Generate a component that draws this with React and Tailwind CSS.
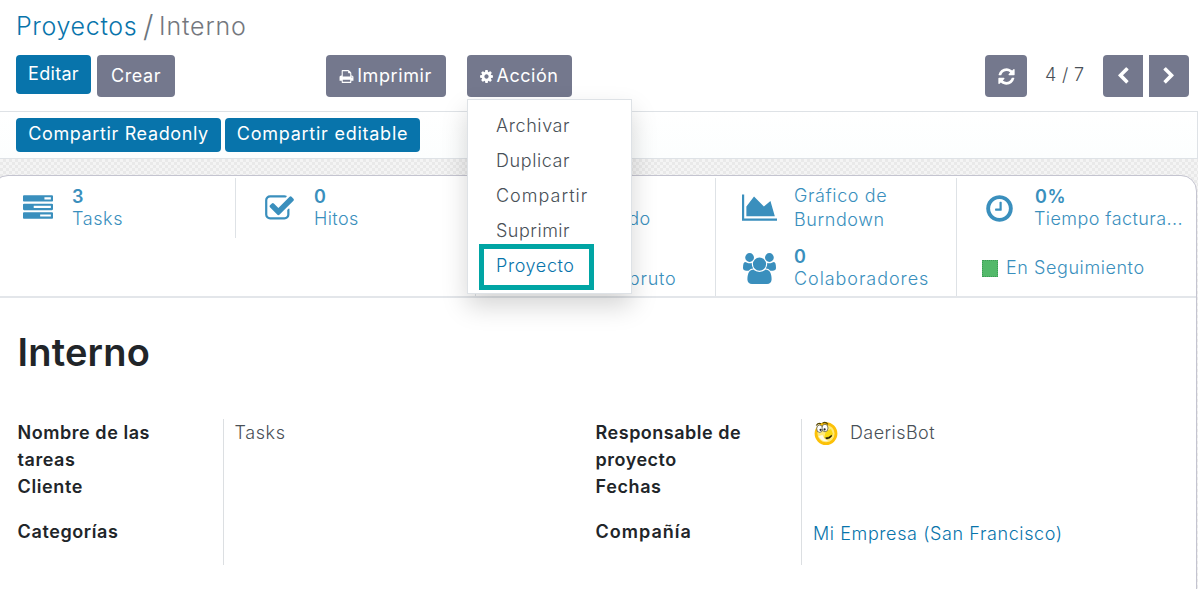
import React from "react";

const P = {
  tasks: "M1024 1408h640v-128h-640v128zm-384-512h1024v-128h-1024v128zm640-512h384v-128h-384v128zm512 832v256q0 26-19 45t-45 19h-1664q-26 0-45-19t-19-45v-256q0-26 19-45t45-19h1664q26 0 45 19t19 45zm0-512v256q0 26-19 45t-45 19h-1664q-26 0-45-19t-19-45v-256q0-26 19-45t45-19h1664q26 0 45 19t19 45zm0-512v256q0 26-19 45t-45 19h-1664q-26 0-45-19t-19-45v-256q0-26 19-45t45-19h1664q26 0 45 19t19 45z",
  check: "M1472 930v318q0 119-84.5 203.5t-203.5 84.5h-832q-119 0-203.5-84.5t-84.5-203.5v-832q0-119 84.5-203.5t203.5-84.5h832q63 0 117 25 15 7 18 23 3 17-9 29l-49 49q-10 10-23 10-3 0-9-2-23-6-45-6h-832q-66 0-113 47t-47 113v832q0 66 47 113t113 47h832q66 0 113-47t47-113v-254q0-13 9-22l64-64q10-10 23-10 6 0 12 3 20 8 20 29zm231-489l-814 814q-24 24-57 24t-57-24l-430-430q-24-24-24-57t24-57l110-110q24-24 57-24t57 24l263 263 647-647q24-24 57-24t57 24l110 110q24 24 24 57t-24 57z",
  chart: "M2048 1536v128h-2048v-1536h128v1408h1920zm-384-1024l256 896h-1664v-576l448-576 576 576z",
  clock: "M1024 544v448q0 14-9 23t-23 9h-320q-14 0-23-9t-9-23v-64q0-14 9-23t23-9h224v-352q0-14 9-23t23-9h64q14 0 23 9t9 23zm416 352q0-148-73-273t-198-198-273-73-273 73-198 198-73 273 73 273 198 198 273 73 273-73 198-198 73-273zm224 0q0 209-103 385.5t-279.5 279.5-385.5 103-385.5-103-279.5-279.5-103-385.5 103-385.5 279.5-279.5 385.5-103 385.5 103 279.5 279.5 103 385.5z",
  print: "M448 1536h896v-256h-896v256zm0-640h896v-384h-160q-40 0-68-28t-28-68v-160h-640v640zm1152 64q0-26-19-45t-45-19-45 19-19 45 19 45 45 19 45-19 19-45zm128 0v416q0 13-9.5 22.5t-22.5 9.5h-224v160q0 40-28 68t-68 28h-960q-40 0-68-28t-28-68v-160h-224q-13 0-22.5-9.5t-9.5-22.5v-416q0-79 56.5-135.5t135.5-56.5h64v-544q0-40 28-68t68-28h672q40 0 88 20t76 48l152 152q28 28 48 76t20 88v256h64q79 0 135.5 56.5t56.5 135.5z",
  cog: "M1152 896q0-106-75-181t-181-75-181 75-75 181 75 181 181 75 181-75 75-181zm512-109v222q0 12-8 23t-20 13l-185 28q-19 54-39 91 35 50 107 138 10 12 10 25t-9 23q-27 37-99 108t-94 71q-12 0-26-9l-138-108q-44 23-91 38-16 136-29 186-7 28-36 28h-222q-14 0-24.5-8.5t-11.5-21.5l-28-184q-49-16-90-37l-141 107q-10 9-25 9-14 0-25-11-126-114-165-168-7-10-7-23 0-12 8-23 15-21 51-66.5t54-70.5q-27-50-41-99l-183-27q-13-2-21-12.5t-8-23.5v-222q0-12 8-23t19-13l186-28q14-46 39-92-40-57-107-138-10-12-10-24 0-10 9-23 26-36 98.5-107.5t94.5-71.5q13 0 26 10l138 107q44-23 91-38 16-136 29-186 7-28 36-28h222q14 0 24.5 8.5t11.5 21.5l28 184q49 16 90 37l142-107q9-9 24-9 13 0 25 10 129 119 165 170 7 8 7 22 0 12-8 23-15 21-51 66.5t-54 70.5q26 50 41 98l183 28q13 2 21 12.5t8 23.5z",
  refresh: "M1639 1056q0 5-1 7-64 268-268 434.5t-478 166.5q-146 0-282.5-55t-243.5-157l-129 129q-19 19-45 19t-45-19-19-45v-448q0-26 19-45t45-19h448q26 0 45 19t19 45-19 45l-137 137q71 66 161 102t187 36q134 0 250-65t186-179q11-17 53-117 8-23 30-23h192q13 0 22.5 9.5t9.5 22.5zm25-800v448q0 26-19 45t-45 19h-448q-26 0-45-19t-19-45 19-45l138-138q-148-137-349-137-134 0-250 65t-186 179q-11 17-53 117-8 23-30 23h-199q-13 0-22.5-9.5t-9.5-22.5v-7q65-268 270-434.5t480-166.5q146 0 284 55.5t245 156.5l130-129q19-19 45-19t45 19 19 45z",
  left: "M1427 301l-531 531 531 531q19 19 19 45t-19 45l-166 166q-19 19-45 19t-45-19l-742-742q-19-19-19-45t19-45l742-742q19-19 45-19t45 19l166 166q19 19 19 45t-19 45z",
  right: "M1363 877l-742 742q-19 19-45 19t-45-19l-166-166q-19-19-19-45t19-45l531-531-531-531q-19-19-19-45t19-45l166-166q19-19 45-19t45 19l742 742q19 19 19 45t-19 45z",
  users: "M593 896q-162 5-265 128h-134q-82 0-138-40.5t-56-118.5q0-353 124-353 6 0 43.5 21t97.5 42.5 119 21.5q67 0 133-23-5 37-5 66 0 139 81 256zm1071 637q0 120-73 189.5t-194 69.5h-874q-121 0-194-69.5t-73-189.5q0-53 3.5-103.5t14-109 26.5-108.5 43-97.5 62-81 85.5-53.5 111.5-20q10 0 43 21.5t73 48 107 48 135 21.5 135-21.5 107-48 73-48 43-21.5q61 0 111.5 20t85.5 53.5 62 81 43 97.5 26.5 108.5 14 109 3.5 103.5zm-1024-1277q0 106-75 181t-181 75-181-75-75-181 75-181 181-75 181 75 75 181zm704 384q0 159-112.5 271.5t-271.5 112.5-271.5-112.5-112.5-271.5 112.5-271.5 271.5-112.5 271.5 112.5 112.5 271.5zm576 225q0 78-56 118.5t-138 40.5h-134q-103-123-265-128 81-117 81-256 0-29-5-66 66 23 133 23 59 0 119-21.5t97.5-42.5 43.5-21q124 0 124 353zm-128-609q0 106-75 181t-181 75-181-75-75-181 75-181 181-75 181 75 75 181z",
};

function Icon({ name, w = 1792, className }) {
  return (
    <svg viewBox={`0 0 ${w} 1792`} className={`shrink-0 ${className}`} fill="currentColor" aria-hidden="true">
      <path d={P[name]} />
    </svg>
  );
}

const btn = "flex items-center justify-center whitespace-nowrap rounded-[4px] text-white";

function Stat({ icon, w, iconClass, value, label, labelClass = "", className = "" }) {
  return (
    <div className={`flex border-l border-[#dee2e6] ${className}`}>
      <div className="flex w-[78px] shrink-0 items-start pl-[25px] pt-[15px]">
        {icon && <Icon name={icon} w={w} className={iconClass} />}
      </div>
      <div className="flex min-w-0 flex-col whitespace-nowrap pt-[8px]">
        <span className="h-[22px] font-semibold leading-[22px]">{value}</span>
        <span className={`leading-[22px] ${labelClass}`}>{label}</span>
      </div>
    </div>
  );
}

function Face() {
  return (
    <svg viewBox="0 0 24 24" className="h-6 w-6 shrink-0" aria-hidden="true">
      <circle cx="12" cy="12.6" r="10" fill="#ffe978" stroke="#fcc108" strokeWidth="2.8" />
      <path d="M12 10l5-2 2 5-2 3-7 1z" fill="#f9da14" />
      <path d="M4.5 15l4-1 2 4 4 2q-7 1.500-10-5z" fill="#fff" opacity=".8" />
      <ellipse cx="5.7" cy="7.7" rx="3" ry="3.7" fill="#fff" stroke="#4d4a2a" strokeWidth=".7" />
      <ellipse cx="11" cy="7" rx="3" ry="3.8" fill="#fff" stroke="#4d4a2a" strokeWidth=".7" />
      <circle cx="6.6" cy="8.8" r="1.1" fill="#222" />
      <circle cx="10.6" cy="8.4" r="1.1" fill="#222" />
      <path d="M2.2 4.5q2-3 5-1.700M8.500 2.200q3-2 5.500 1.200" fill="none" stroke="#554400" strokeWidth="1.1" />
      <path d="M11.500 16.800q3.500 0 6-2.600l.4.8q-2.400 3.400-5.400 3z" fill="#171200" stroke="#171200" strokeWidth=".5" />
    </svg>
  );
}

export default function App() {
  return (
    <div className="h-[589px] w-[1198px] overflow-hidden bg-white font-['Inter','Open_Sans',sans-serif] text-[18px] font-light tracking-[0.6px] text-[#495057]">
      <header className="flex h-[112px] flex-col border-b border-[#dee2e6]">
        <div className="flex h-[55px] items-center whitespace-nowrap pb-[4px] pl-4 text-[25px] leading-[30px]">
          <span className="w-[127px] tracking-[0.65px] text-[#0874ab]">Proyectos</span>
          <span className="w-[16px] text-[30px] text-[#6c757d]">/</span>
          <span className="tracking-[0.85px] text-[#74777d]">Interno</span>
        </div>
        <div className="flex items-start pl-4 font-normal">
          <button className={`${btn} h-[39px] w-[75px] bg-[#0874ab] pb-[2px] tracking-[0.3px]`}>Editar</button>
          <button className={`${btn} ml-[6px] h-[42px] w-[78px] bg-[#74788d] pb-[2px]`}>Crear</button>
          <button className={`${btn} ml-[151px] h-[42px] w-[120px] gap-[3px] bg-[#74788d] pb-[2px] pr-px`}>
            <Icon name="print" className="mt-[2px] h-[15px] w-[15px]" />Imprimir
          </button>
          <div className="relative ml-[21px]">
            <button className={`${btn} h-[42px] w-[105px] gap-[3px] bg-[#74788d] pb-[2px] pr-[2px] tracking-[0.5px]`}>
              <Icon name="cog" className="mt-[2px] h-[15px] w-[15px]" />Acción
            </button>
            <div className="absolute left-0 top-[44px] z-10 flex h-[195px] w-[165px] flex-col border border-[#dee2e6] bg-white pl-[28px] pt-[8px] font-light leading-[35px] shadow-[0_12px_24px_rgba(0,0,0,0.17)]">
              <span className="tracking-[0.6px]">Archivar</span>
              <span className="tracking-[0.6px]">Duplicar</span>
              <span className="tracking-[1px]">Compartir</span>
              <span className="tracking-[0.5px]">Suprimir</span>
              <span className="tracking-[0.6px] text-[#0874ab]">Proyecto</span>
              <div className="absolute left-[11px] top-[144px] h-[46px] w-[115px] border-[5px] border-[#00a5a4]" />
            </div>
          </div>
          <button className={`${btn} ml-[413px] h-[42px] w-[42px] bg-[#74788d]`}>
            <Icon name="refresh" className="h-[19px] w-[19px]" />
          </button>
          <span className="ml-[18px] w-[58px] font-light leading-[40px] tracking-[0.3px]">4 / 7</span>
          <button className="flex h-[42px] w-10 items-center justify-center rounded-l-[4px] bg-[#74788d] text-white">
            <Icon name="left" className="h-[18px] w-[18px]" />
          </button>
          <button className="ml-[6px] flex h-[42px] w-10 items-center justify-center rounded-r-[4px] bg-[#74788d] text-white">
            <Icon name="right" className="h-[18px] w-[18px]" />
          </button>
        </div>
      </header>

      <div className="flex h-[47px] gap-1 border-b border-r border-[#dee2e6] bg-gradient-to-b from-white to-[#fcfefe] pl-4 pt-[6px] font-normal">
        <button className={`${btn} h-[34px] w-[205px] bg-[#0874ab] pb-[4px] tracking-[0.63px]`}>Compartir Readonly</button>
        <button className={`${btn} h-[34px] w-[195px] bg-[#0874ab] pb-[4px] tracking-[0.75px]`}>Compartir editable</button>
      </div>

      <div className="h-[430px] bg-[#f3f3f3] bg-[repeating-conic-gradient(#e9e9e9_0_25%,#f4f4f4_0_50%)] bg-[length:6px_6px] pt-4">
        <main className="-ml-[8px] mr-px h-[430px] rounded-t-[16px] border border-[#c4c4d0] bg-white">
          <section className="grid h-[122px] grid-cols-[242px_240px_240px_241px_1fr] grid-rows-[60px_58px] border-b-2 border-[#e3e6ea] pt-[2px] text-[#3a8fbd]">
            <Stat icon="tasks" iconClass="ml-[4px] h-[30px] w-[30px]" value="3" label="Tasks" className="border-l-0! pl-[1px]" />
            <Stat icon="check" iconClass="ml-[3px] h-[31px] w-[31px]" value="0" label="Hitos" labelClass="tracking-[0.4px]" />
            <Stat label="Planificado" labelClass="tracking-[0.4px]" />
            <div className="flex border-l border-[#dee2e6]">
              <div className="w-[78px] shrink-0 pl-[26px] pt-[14px]"><Icon name="chart" w={2048} className="h-[31px] w-[35px]" /></div>
              <div className="flex flex-col pt-[6px] leading-[24px]"><span>Gráfico de</span><span>Burndown</span></div>
            </div>
            <Stat icon="clock" iconClass="ml-[2px] h-[31px] w-[31px]" value="0%" label="Tiempo factura..." labelClass="tracking-[0.42px] -ml-px" />
            <Stat label="Margen bruto" className="col-start-3" labelClass="tracking-[0.8px]" />
            <Stat icon="users" w={1920} iconClass="ml-[2px] h-[31px] w-[33px]" value="0" label="Colaboradores" labelClass="tracking-[0.93px]" />
            <div className="flex items-center border-l border-[#dee2e6] pl-[25px]">
              <span className="mt-[2px] h-[17px] w-[16px] border border-dotted border-[#3d9a55] bg-[#53b96a]" />
              <span className="ml-2 tracking-[0.57px]">En Seguimiento</span>
            </div>
          </section>

          <h1 className="ml-[24.5px] mt-[30px] text-[38px] font-semibold leading-[48px] tracking-[0.2px] text-[#212529]">Interno</h1>

          <section className="ml-[24px] mt-[43px] flex">
            <div className="h-[146px] w-[206px] pl-[0.6px] font-semibold leading-[27px] text-[#212529]">
              <div className="w-[150px] tracking-[0.54px]">Nombre de las tareas</div>
              <div>Cliente</div>
              <div className="mt-[18px]">Categorías</div>
            </div>
            <div className="h-[146px] w-[372px] border-l border-[#dcdfe2] pl-[10.5px] leading-[27px]">Tasks</div>
            <div className="h-[146px] w-[206px] pl-[0.6px] font-semibold leading-[27px] text-[#212529]">
              <div className="w-[160px] tracking-[0.5px]">Responsable de proyecto</div>
              <div>Fechas</div>
              <div className="mt-[18px] tracking-[1px]">Compañía</div>
            </div>
            <div className="h-[146px] border-l border-[#dcdfe2] pl-[11px] leading-[27px]">
              <div className="flex h-[27px] items-center gap-3 pl-px"><Face /><span className="tracking-[0.42px]">DaerisBot</span></div>
              <div className="mt-[74px] text-[#0874ab]">Mi Empresa (San Francisco)</div>
            </div>
          </section>
        </main>
      </div>
    </div>
  );
}
